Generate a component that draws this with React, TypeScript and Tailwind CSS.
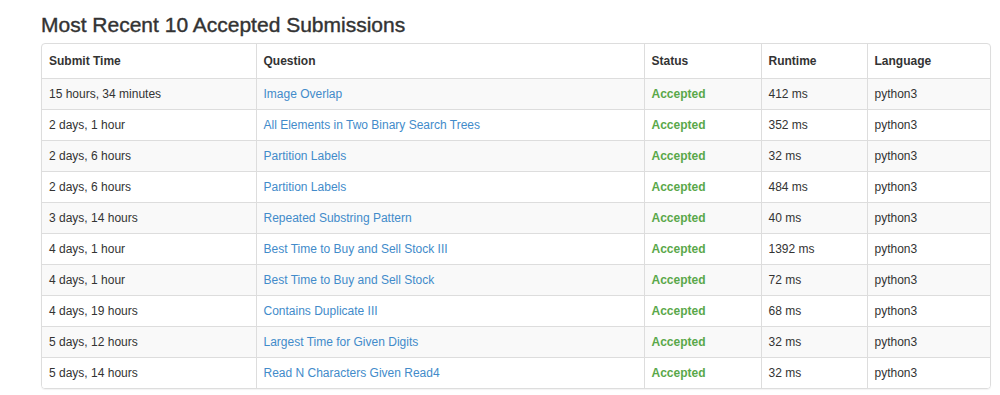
import React from "react";

const rows: [string, string, string, string][] = [
  ["15 hours, 34 minutes", "Image Overlap", "412 ms", "python3"],
  ["2 days, 1 hour", "All Elements in Two Binary Search Trees", "352 ms", "python3"],
  ["2 days, 6 hours", "Partition Labels", "32 ms", "python3"],
  ["2 days, 6 hours", "Partition Labels", "484 ms", "python3"],
  ["3 days, 14 hours", "Repeated Substring Pattern", "40 ms", "python3"],
  ["4 days, 1 hour", "Best Time to Buy and Sell Stock III", "1392 ms", "python3"],
  ["4 days, 1 hour", "Best Time to Buy and Sell Stock", "72 ms", "python3"],
  ["4 days, 19 hours", "Contains Duplicate III", "68 ms", "python3"],
  ["5 days, 12 hours", "Largest Time for Given Digits", "32 ms", "python3"],
  ["5 days, 14 hours", "Read N Characters Given Read4", "32 ms", "python3"],
];

export default function App() {
  return (
    <div
      className="w-[1000px] h-[395px] bg-white text-[#333] overflow-hidden"
      style={{ fontFamily: '"Liberation Sans", Arial, sans-serif' }}
    >
      <div className="pl-[41px] pr-[9px]">
        <h3 className="text-[21px] font-normal leading-[24px] pt-[13px] pb-[6px] text-[#333] [-webkit-text-stroke:0.4px_#333]">
          Most Recent 10 Accepted Submissions
        </h3>
        <div className="border border-[#ddd] rounded-[4px] shadow-[0_1px_1px_rgba(0,0,0,0.05)] overflow-hidden">
          <table className="w-full border-collapse text-[12px] leading-[18px] table-fixed">
            <colgroup>
              <col className="w-[214px]" />
              <col className="w-[388px]" />
              <col className="w-[117px]" />
              <col className="w-[106px]" />
              <col />
            </colgroup>
            <thead>
              <tr className="h-[34px] border-b border-[#ddd]">
                {["Submit Time", "Question", "Status", "Runtime", "Language"].map((h, i) => (
                  <th
                    key={h}
                    className={`text-left font-bold px-[7px] py-0 ${i > 0 ? "border-l border-[#ddd]" : ""}`}
                  >
                    {h}
                  </th>
                ))}
              </tr>
            </thead>
            <tbody>
              {rows.map((r, idx) => (
                <tr
                  key={idx}
                  className={`h-[31px] ${idx < rows.length - 1 ? "border-b border-[#ddd]" : ""} ${
                    idx % 2 === 0 ? "bg-[#f9f9f9]" : "bg-white"
                  }`}
                >
                  <td className="px-[7px] py-0">{r[0]}</td>
                  <td className="px-[7px] py-0 border-l border-[#ddd] text-[#428bca]">{r[1]}</td>
                  <td className="px-[7px] py-0 border-l border-[#ddd] text-[#5aa84a] font-bold">Accepted</td>
                  <td className="px-[7px] py-0 border-l border-[#ddd]">{r[2]}</td>
                  <td className="px-[7px] py-0 border-l border-[#ddd]">{r[3]}</td>
                </tr>
              ))}
            </tbody>
          </table>
        </div>
      </div>
    </div>
  );
}
